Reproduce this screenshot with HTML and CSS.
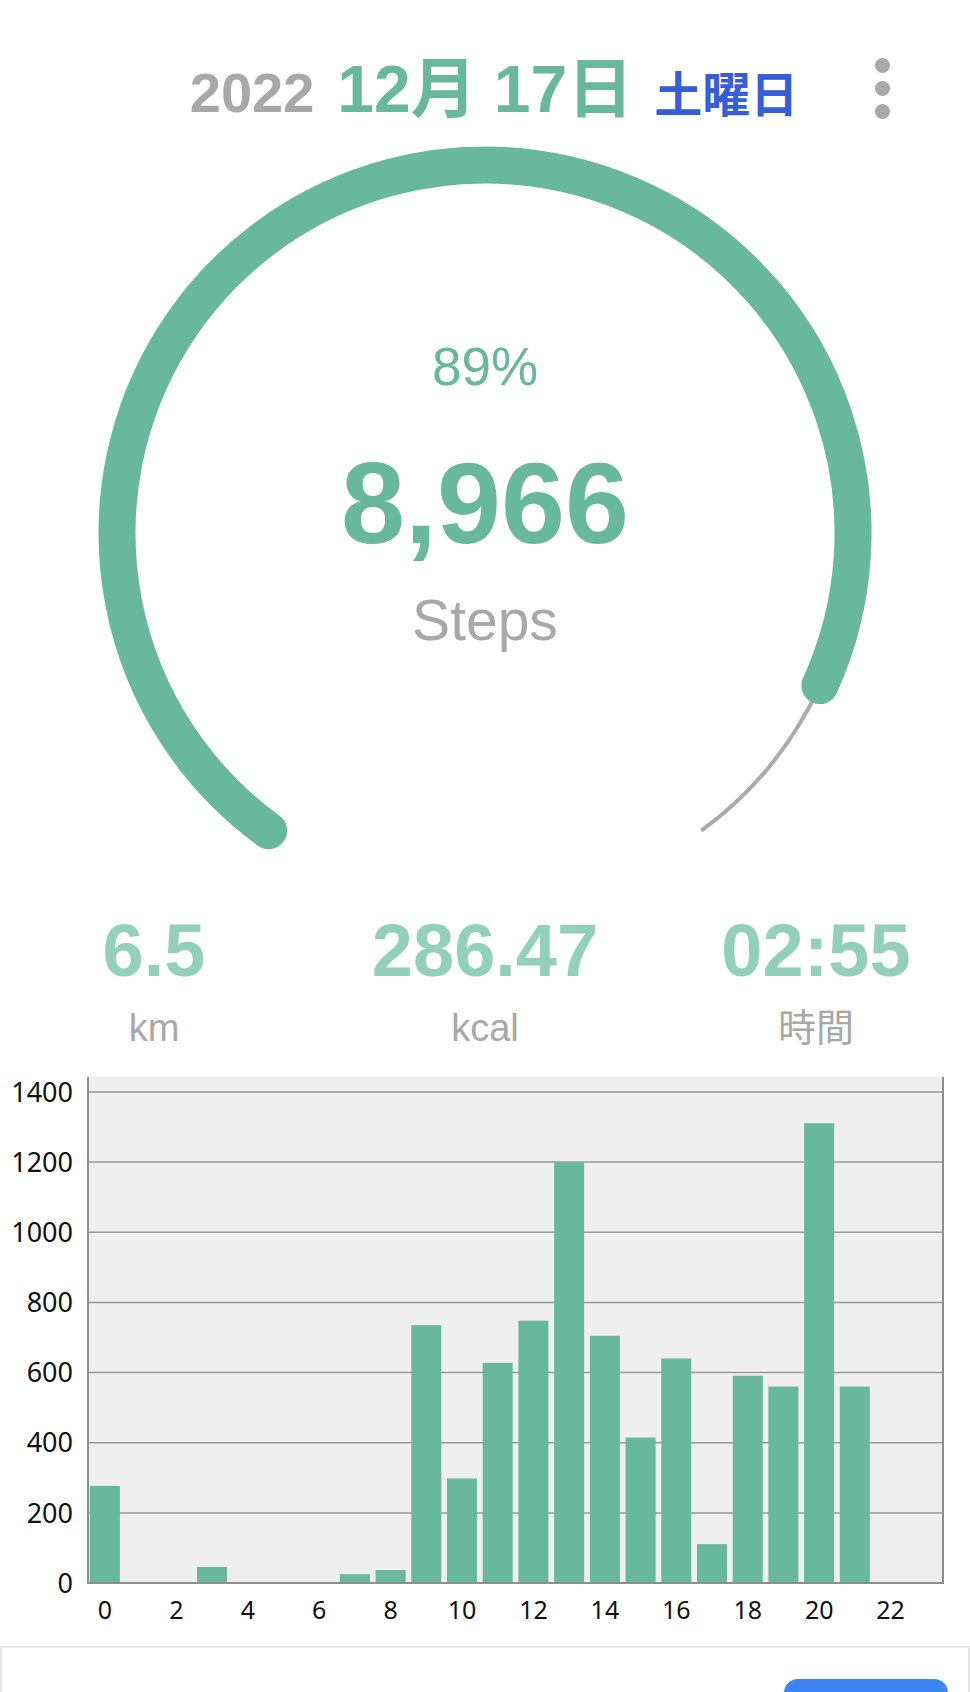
FILE: index.html
```html
<!DOCTYPE html>
<html lang="ja">
<head>
    <meta charset="UTF-8">
    <meta name="viewport" content="width=device-width, initial-scale=1.0">
    <title>歩数</title>
    <link rel="stylesheet" href="styles.css">
</head>
<body>
    <div id="page">
        <header class="date-bar">
            <div class="date">
                <span class="year">2022</span>
                <span class="day">12月<span class="sp"></span>17日</span>
                <span class="weekday">土曜日</span>
            </div>
            <div class="menu">
                <span></span><span></span><span></span>
            </div>
        </header>

        <section class="gauge">
            <svg class="ring" width="970" height="750" viewBox="0 0 970 750">
                <!-- track: 288deg sweep, from 126deg round to 54deg -->
                <path d="M 268.7 700.7 A 368 368 0 1 1 701.3 700.7" fill="none" stroke="#aaaaaa" stroke-width="4"/>
                <!-- 89% -->
                <path d="M 268.7 700.7 A 368 368 0 1 1 819.9 555.6" fill="none" stroke="#67b89d" stroke-width="37" stroke-linecap="round"/>
            </svg>
            <div class="gauge-text">
                <p class="pct">89%</p>
                <p class="steps">8,966</p>
                <p class="unit">Steps</p>
            </div>
        </section>

        <section class="stats">
            <div class="stat">
                <p class="num">6.5</p>
                <p class="lbl">km</p>
            </div>
            <div class="stat">
                <p class="num">286.47</p>
                <p class="lbl">kcal</p>
            </div>
            <div class="stat">
                <p class="num">02:55</p>
                <p class="lbl">時間</p>
            </div>
        </section>

        <section class="chart">
            <svg width="970" height="586" viewBox="0 0 970 586">
                <rect x="87" y="17" width="857" height="506" fill="#efefef"/>
                <g stroke="#999999" stroke-width="1.5">
                    <line x1="87" y1="32" x2="944" y2="32"/>
                    <line x1="87" y1="102.1" x2="944" y2="102.1"/>
                    <line x1="87" y1="172.3" x2="944" y2="172.3"/>
                    <line x1="87" y1="242.4" x2="944" y2="242.4"/>
                    <line x1="87" y1="312.6" x2="944" y2="312.6"/>
                    <line x1="87" y1="382.7" x2="944" y2="382.7"/>
                    <line x1="87" y1="452.9" x2="944" y2="452.9"/>
                </g>
                <g fill="#67b89d">
                    <rect x="89.9" y="425.9" width="30" height="97.1"/>
                    <rect x="197.0" y="506.9" width="30" height="16.1"/>
                    <rect x="339.9" y="514.2" width="30" height="8.8"/>
                    <rect x="375.6" y="510.0" width="30" height="13.0"/>
                    <rect x="411.3" y="265.2" width="30" height="257.8"/>
                    <rect x="447.0" y="418.5" width="30" height="104.5"/>
                    <rect x="482.7" y="302.8" width="30" height="220.2"/>
                    <rect x="518.4" y="260.7" width="30" height="262.3"/>
                    <rect x="554.1" y="102.1" width="30" height="420.9"/>
                    <rect x="589.9" y="275.8" width="30" height="247.2"/>
                    <rect x="625.6" y="377.5" width="30" height="145.5"/>
                    <rect x="661.3" y="298.5" width="30" height="224.5"/>
                    <rect x="697.0" y="484.1" width="30" height="38.9"/>
                    <rect x="732.7" y="315.7" width="30" height="207.3"/>
                    <rect x="768.4" y="326.6" width="30" height="196.4"/>
                    <rect x="804.1" y="63.2" width="30" height="459.8"/>
                    <rect x="839.8" y="326.6" width="30" height="196.4"/>
                </g>
                <g stroke="#8e8e8e" stroke-width="2" fill="none">
                    <line x1="88" y1="17" x2="88" y2="524"/>
                    <line x1="943" y1="17" x2="943" y2="524"/>
                    <line x1="87" y1="523" x2="944" y2="523"/>
                </g>
                <g class="ylab" text-anchor="end">
                    <text x="73" y="41.6">1400</text>
                    <text x="73" y="111.7">1200</text>
                    <text x="73" y="181.9">1000</text>
                    <text x="73" y="252">800</text>
                    <text x="73" y="322.2">600</text>
                    <text x="73" y="392.3">400</text>
                    <text x="73" y="462.5">200</text>
                    <text x="73" y="532.6">0</text>
                </g>
                <g class="xlab" text-anchor="middle">
                    <text x="104.9" y="559">0</text>
                    <text x="176.3" y="559">2</text>
                    <text x="247.8" y="559">4</text>
                    <text x="319.2" y="559">6</text>
                    <text x="390.6" y="559">8</text>
                    <text x="462.0" y="559">10</text>
                    <text x="533.5" y="559">12</text>
                    <text x="604.9" y="559">14</text>
                    <text x="676.3" y="559">16</text>
                    <text x="747.8" y="559">18</text>
                    <text x="819.2" y="559">20</text>
                    <text x="890.6" y="559">22</text>
                </g>
            </svg>
        </section>

        <div class="banner">
            <div class="banner-btn"></div>
        </div>
    </div>
</body>
</html>
```

FILE: styles.css
```css
* {
    margin: 0;
    padding: 0;
    box-sizing: border-box;
}

body {
    background: #ffffff;
    font-family: "Liberation Sans", "Noto Sans CJK JP", sans-serif;
    overflow: hidden;
}

#page {
    width: 970px;
    height: 1692px;
    display: flex;
    flex-direction: column;
}

#page > * {
    flex-shrink: 0;
}

/* date header */
.date-bar {
    height: 130px;
    display: grid;
    grid-template-columns: 1fr auto 1fr;
    padding-top: 56px;
}

.date {
    grid-column: 2;
    display: flex;
    align-items: baseline;
    margin-left: 18px;
    line-height: 1;
    font-weight: 700;
}

.year {
    font-size: 56px;
    color: #a8a8a8;
    margin-right: 23px;
}

.day {
    font-size: 66px;
    color: #67b89d;
    margin-right: 21px;
}

.day .sp {
    display: inline-block;
    width: 17px;
}

.weekday {
    font-size: 48px;
    color: #375ed6;
}

.menu {
    grid-column: 3;
    justify-self: end;
    padding-right: 80px;
    margin-top: 2px;
    display: flex;
    flex-direction: column;
    gap: 8px;
}

.menu span {
    width: 15px;
    height: 15px;
    border-radius: 50%;
    background: #a8a8a8;
}

/* ring */
.gauge {
    height: 750px;
    display: grid;
}

.gauge > * {
    grid-area: 1 / 1;
}

.gauge-text {
    display: flex;
    flex-direction: column;
    align-items: center;
    padding-top: 210px;
    line-height: 1;
}

.pct {
    font-size: 53px;
    color: #67b89d;
}

.steps {
    margin-top: 53px;
    font-size: 115px;
    font-weight: 700;
    color: #67b89d;
}

.unit {
    margin-top: 31px;
    font-size: 57px;
    color: #a8a8a8;
}

/* totals */
.stats {
    height: 180px;
    display: grid;
    grid-template-columns: repeat(3, 331px);
    justify-content: center;
    padding-top: 34px;
    line-height: 1;
    text-align: center;
}

.num {
    font-size: 74px;
    font-weight: 700;
    color: #92d0bb;
}

.lbl {
    margin-top: 21px;
    font-size: 38px;
    color: #a8a8a8;
}

/* hourly chart */
.chart {
    height: 586px;
}

.chart text {
    font-family: "Noto Sans", sans-serif;
    fill: #111111;
}

.ylab text {
    font-size: 27px;
}

.xlab text {
    font-size: 25px;
}

.banner {
    flex: 1 1 auto;
    min-height: 0;
    overflow: hidden;
    border: 2px solid #e6e6e6;
    border-bottom: none;
    display: flex;
    justify-content: flex-end;
}

.banner-btn {
    width: 164px;
    height: 60px;
    flex-shrink: 0;
    margin-top: 31px;
    margin-right: 20px;
    border-radius: 14px;
    background: #3d85f5;
}
```
